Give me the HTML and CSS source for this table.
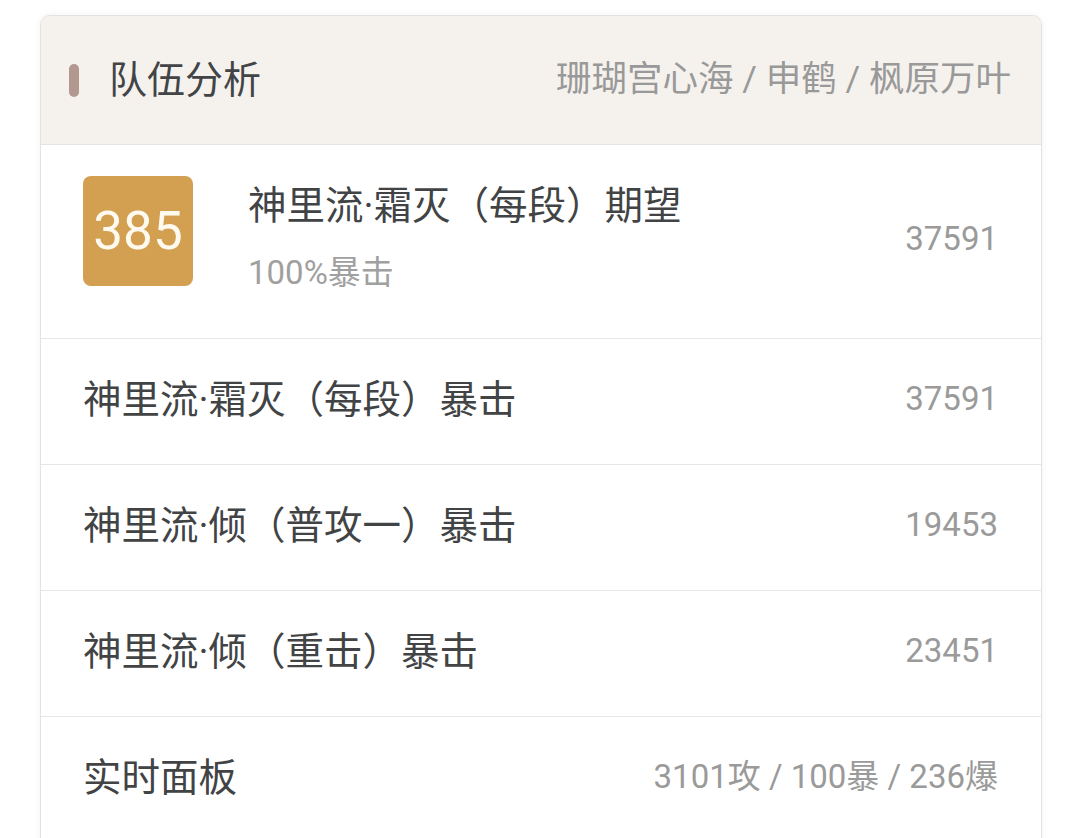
FILE: index.html
```html
<!DOCTYPE html>
<html lang="zh-CN">
<head>
<meta charset="utf-8">
<title>队伍分析</title>
<link rel="stylesheet" href="styles.css">
</head>
<body>
<div class="card">
  <div class="card-head">
    <div class="head-left">
      <span class="bar"></span>
      <span class="head-title">队伍分析</span>
    </div>
    <div class="head-right">珊瑚宫心海 / 申鹤 / 枫原万叶</div>
  </div>
  <div class="row row-main">
    <div class="badge">385</div>
    <div class="main-text">
      <div class="row-title">神里流·霜灭（每段）期望</div>
      <div class="row-sub">100%暴击</div>
    </div>
    <div class="row-value main-value">37591</div>
  </div>
  <div class="row">
    <div class="row-title">神里流·霜灭（每段）暴击</div>
    <div class="row-value">37591</div>
  </div>
  <div class="row">
    <div class="row-title">神里流·倾（普攻一）暴击</div>
    <div class="row-value">19453</div>
  </div>
  <div class="row">
    <div class="row-title">神里流·倾（重击）暴击</div>
    <div class="row-value">23451</div>
  </div>
  <div class="row">
    <div class="row-title">实时面板</div>
    <div class="row-value">3101攻 / 100暴 / 236爆</div>
  </div>
</div>
</body>
</html>
```

FILE: styles.css
```css
* { box-sizing: border-box; }
html, body {
  margin: 0;
  padding: 0;
  background: #ffffff;
}
body {
  font-family: "Roboto", "Noto Sans CJK SC", sans-serif;
  color: #414345;
  padding: 15px 38px 0 40px;
}
.card {
  border: 1px solid #e2e2e2;
  border-bottom: none;
  border-radius: 10px 10px 0 0;
  overflow: hidden;
  box-shadow: 0 0 6px rgba(0, 0, 0, 0.06);
  background: #fff;
}
.card-head {
  height: 129px;
  background: #f5f2ee;
  border-bottom: 1px solid #e6e4e1;
  display: flex;
  align-items: center;
  justify-content: space-between;
  padding: 0 30px 0 28px;
}
.head-left {
  display: flex;
  align-items: center;
  gap: 30px;
}
.bar {
  width: 10px;
  height: 33px;
  border-radius: 5px;
  background: #b3988f;
}
.head-title {
  font-size: 38px;
  color: #424446;
  line-height: 1;
}
.head-right {
  font-size: 35.5px;
  color: #999999;
  line-height: 1;
}
.row {
  display: flex;
  align-items: center;
  justify-content: space-between;
  height: 126px;
  border-bottom: 1px solid #e6e6e6;
  padding: 0 43px 0 42px;
}
.row > .row-title {
  margin-bottom: 3px;
}
.row-main {
  height: 194px;
  align-items: flex-start;
  padding-top: 31px;
}
.badge {
  width: 110px;
  height: 110px;
  border-radius: 8px;
  background: #d3a052;
  color: #fffaf0;
  font-size: 53px;
  display: flex;
  align-items: center;
  justify-content: center;
  flex-shrink: 0;
}
.main-text {
  flex: 1;
  margin-left: 55px;
  padding-top: 7px;
}
.row-title {
  font-size: 38.5px;
  line-height: 1.2;
  color: #414345;
}
.row-sub {
  font-size: 33px;
  color: #a0a0a0;
  margin-top: 24px;
  line-height: 1.2;
}
.row-value {
  font-size: 33px;
  color: #9a9a9a;
  line-height: 1;
  margin-bottom: 6px;
}
.main-value {
  margin-top: 46px;
}
```
